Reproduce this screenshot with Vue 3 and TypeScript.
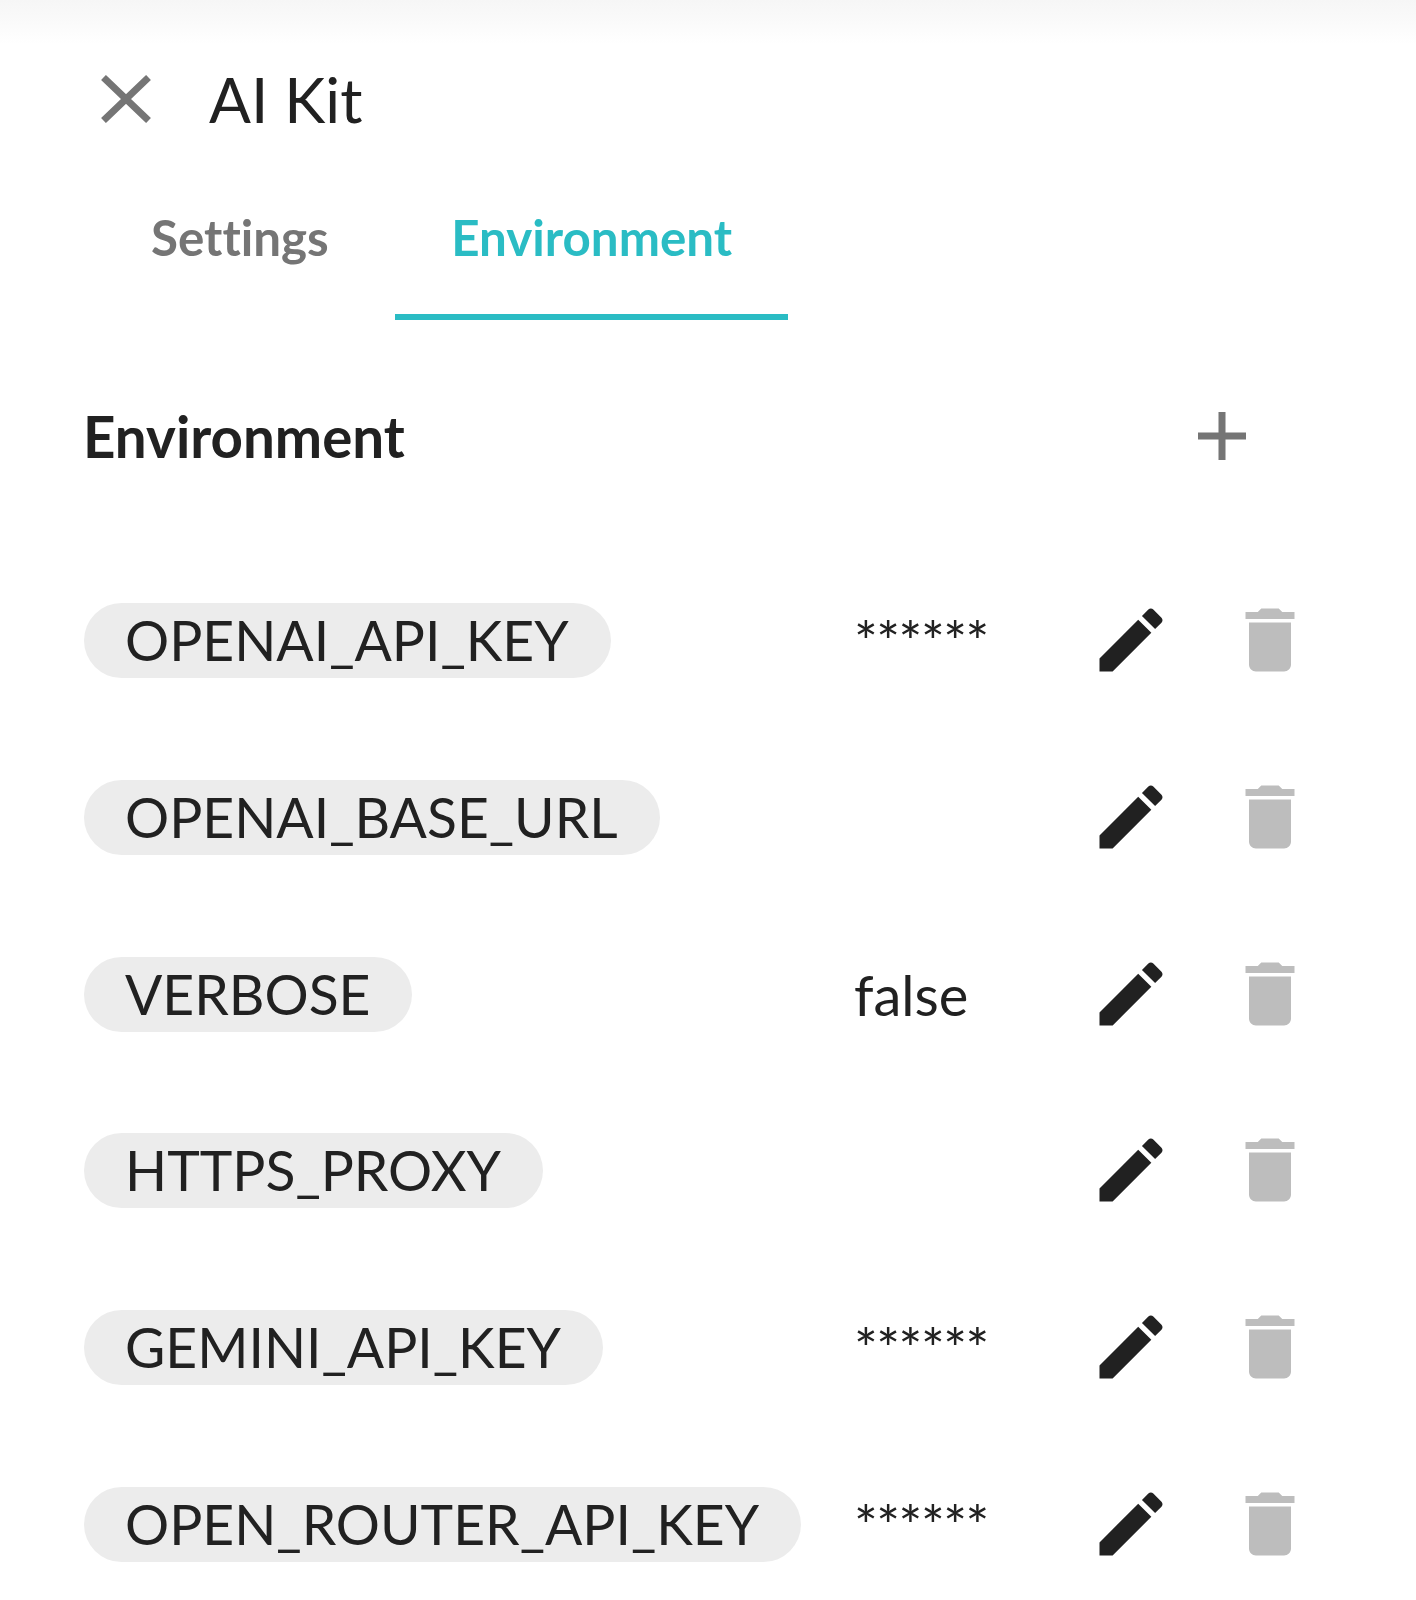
<script setup lang="ts">
import { ref } from "vue";

interface EnvVar {
  name: string;
  value: string;
}

const tabs = ["Settings", "Environment"];
const activeTab = ref("Environment");

const envVars: EnvVar[] = [
  { name: "OPENAI_API_KEY", value: "******" },
  { name: "OPENAI_BASE_URL", value: "" },
  { name: "VERBOSE", value: "false" },
  { name: "HTTPS_PROXY", value: "" },
  { name: "GEMINI_API_KEY", value: "******" },
  { name: "OPEN_ROUTER_API_KEY", value: "******" },
];
</script>

<template>
  <div class="page">
    <header class="title-bar">
      <svg class="close" viewBox="0 0 50 48" aria-hidden="true">
        <path d="M2.5 2.5 L47.5 45.5 M47.5 2.5 L2.5 45.5" />
      </svg>
      <h1>AI Kit</h1>
    </header>

    <nav class="tabs">
      <button
        v-for="tab in tabs"
        :key="tab"
        class="tab"
        :class="{ active: tab === activeTab }"
        type="button"
        @click="activeTab = tab"
      >
        {{ tab }}
      </button>
    </nav>

    <section class="section-head">
      <h2>Environment</h2>
      <svg class="plus" viewBox="0 0 50 50" aria-hidden="true">
        <path d="M25 1 V49 M1 25 H49" />
      </svg>
    </section>

    <ul class="env-list">
      <li v-for="item in envVars" :key="item.name" class="env-row">
        <div><span class="chip">{{ item.name }}</span></div>
        <span class="value" :class="{ masked: item.value.startsWith('*') }">{{ item.value }}</span>
        <svg class="icon edit" viewBox="0 0 24 24" aria-hidden="true">
          <path d="M3 17.25V21h3.75L17.81 9.94l-3.75-3.75L3 17.25zM20.71 7.04c.39-.39.39-1.02 0-1.41l-2.34-2.34c-.39-.39-1.02-.39-1.41 0l-1.83 1.83 3.75 3.75 1.83-1.83z" />
        </svg>
        <svg class="icon trash" viewBox="0 0 24 24" aria-hidden="true">
          <path d="M6 19c0 1.1.9 2 2 2h8c1.1 0 2-.9 2-2V7H6v12zM19 4h-3.5l-1-1h-5l-1 1H5v2h14V4z" />
        </svg>
      </li>
    </ul>
  </div>
</template>

<style scoped>
.page {
  height: 1600px;
  box-sizing: border-box;
  padding: 0 0 0 84px;
  overflow: hidden;
  color: #212121;
  font-family: Lato, "Open Sans", sans-serif;
  font-variant-ligatures: none;
  background: linear-gradient(#f6f6f6 0, #fafafa 22px, #ffffff 44px);
}

.title-bar {
  display: flex;
  align-items: center;
  gap: 58px;
  padding: 75px 0 0 17px;
  height: 48px;
}

.close {
  width: 50px;
  height: 48px;
  flex: none;
}

.close path {
  fill: none;
  stroke: #757575;
  stroke-width: 7;
}

h1 {
  margin: 0;
  font-size: 62px;
  font-weight: 400;
  line-height: 48px;
}

.tabs {
  display: flex;
  gap: 10.5px;
  margin: 0 0 0 11px;
  padding-top: 60px;
}

.tab {
  height: 137px;
  padding: 0 56px 23px;
  border: 0;
  border-bottom: 6px solid transparent;
  color: #757575;
  background: none;
  font: inherit;
  font-size: 49.3px;
  font-weight: 700;
  cursor: pointer;
}

.tab.active {
  border-bottom-color: #2abcc4;
  color: #2abcc4;
}

.section-head {
  display: flex;
  align-items: center;
  justify-content: space-between;
  width: 1163px;
  margin-top: 86px;
  height: 60px;
}

h2 {
  margin: 0 0 0 -1px;
  font-size: 56.5px;
  font-weight: 700;
  line-height: 60px;
}

.plus {
  width: 50px;
  height: 50px;
}

.plus path {
  fill: none;
  stroke: #757575;
  stroke-width: 7;
}

.env-list {
  display: flex;
  flex-direction: column;
  gap: 101.8px;
  margin: 132px 0 0;
  padding: 0;
  list-style: none;
}

.env-row {
  display: grid;
  grid-template-columns: 770px 234.5px 139px 84px;
  align-items: center;
  height: 75px;
}

.chip {
  display: inline-block;
  height: 75px;
  padding: 0 42px 0 41px;
  border-radius: 38px;
  background: #ececec;
  font-size: 55.2px;
  line-height: 75px;
}

.value {
  font-size: 56px;
  line-height: 69px;
}

.value.masked {
  letter-spacing: -1.5px;
}

.icon {
  width: 84px;
  height: 84px;
  margin-bottom: 1px;
}

.edit {
  fill: #212121;
}

.trash {
  fill: #bdbdbd;
}
</style>
